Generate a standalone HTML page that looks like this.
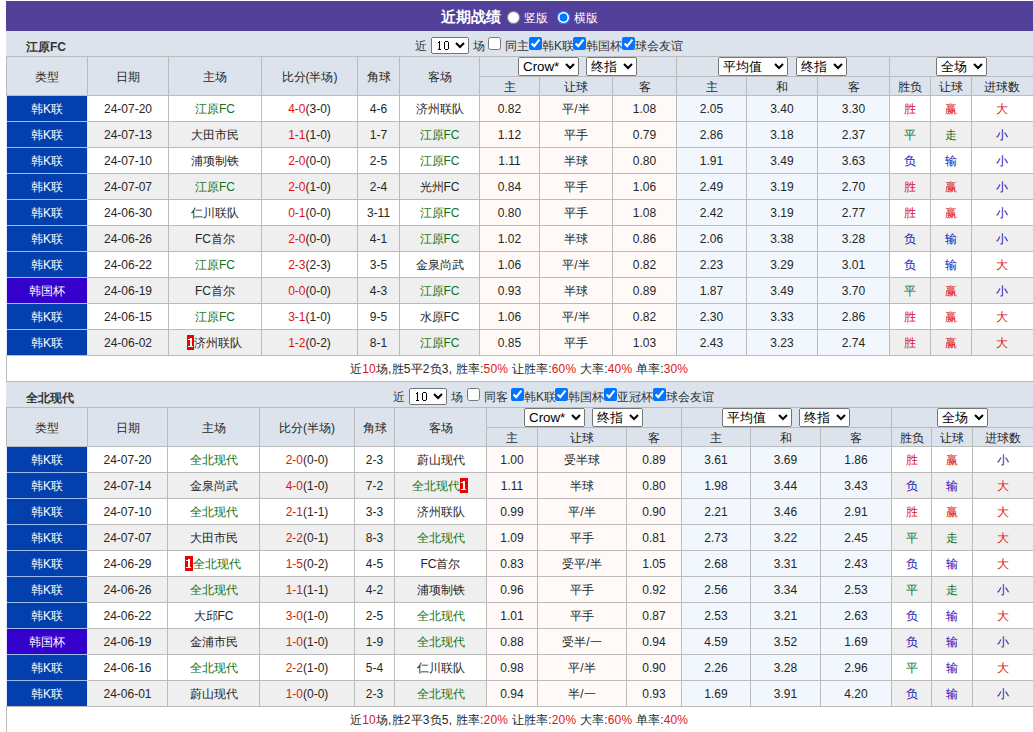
<!DOCTYPE html><html><head><meta charset="utf-8"><style>
html,body{margin:0;padding:0;background:#fff;overflow:hidden;width:1033px;height:732px}
body{position:relative;font-family:"Liberation Sans",sans-serif;font-size:12px;color:#262626}
.c{position:absolute;text-align:center;white-space:nowrap;overflow:hidden}
.l{position:absolute}
.bar{position:absolute;left:6px;width:1034px;background:#dde3ec}
.tn{position:absolute;left:26px;height:25px;line-height:32px;font-weight:bold;color:#333}
.tx{position:absolute;height:25px;line-height:31px;white-space:nowrap;color:#333}
.title{position:absolute;left:6px;top:1px;width:1034px;height:30px;background:#52409b}
.tt{position:absolute;top:1px;height:30px;line-height:31px;color:#fff;white-space:nowrap}
select{position:absolute;margin:0}
.s10{width:38px;height:17px;font-family:"Liberation Mono",monospace;font-size:12px;padding:0 1px 0 0}
.sel{height:19px;font-family:"Liberation Sans",sans-serif;font-size:13.33px}
.ten{position:absolute}
.cb{position:absolute;margin:0;width:13px;height:13px}
.rd{position:absolute;margin:0;width:13px;height:13px}
.r{color:#dd1515}
.bd{display:inline-block;background:#ee0000;width:7px;height:15px;vertical-align:-3px}

</style></head><body>
<div class="title"></div>
<div class="tt" style="left:441px;font-size:15px;font-weight:bold">近期战绩</div>
<input type="radio" name="v" class="rd" style="left:507px;top:11px">
<div class="tt" style="left:524px;line-height:35px">竖版</div>
<input type="radio" name="v" checked class="rd" style="left:557px;top:11px">
<div class="tt" style="left:574px;line-height:35px">横版</div>
<div class="bar" style="top:31px;height:25px"></div>
<div class="tn" style="top:31px">江原FC</div>
<div class="tx" style="left:415px;top:31px">近</div>
<select class="s10" style="left:431px;top:37px"><option>&nbsp;</option></select>
<svg class="ten" style="left:438px;top:41px" width="12" height="10" shape-rendering="crispEdges"><g fill="#000"><rect x="1" y="0" width="1" height="9"/><rect x="0" y="1" width="1" height="1"/><rect x="0" y="8" width="3" height="1"/><rect x="6" y="1" width="1" height="7"/><rect x="10" y="1" width="1" height="7"/><rect x="7" y="0" width="3" height="1"/><rect x="7" y="8" width="3" height="1"/></g></svg>
<div class="tx" style="left:473px;top:31px">场</div>
<input type="checkbox" class="cb" style="left:488px;top:37px">
<div class="tx" style="left:505px;top:31px">同主</div>
<input type="checkbox" checked class="cb" style="left:529px;top:37px">
<div class="tx" style="left:542px;top:31px">韩K联</div>
<input type="checkbox" checked class="cb" style="left:573px;top:37px">
<div class="tx" style="left:586px;top:31px">韩国杯</div>
<input type="checkbox" checked class="cb" style="left:622px;top:37px">
<div class="tx" style="left:635px;top:31px">球会友谊</div>
<div class="c" style="left:7px;top:57px;width:80px;height:38px;line-height:40px;background:#dde3ec;padding-top:0">类型</div>
<div class="c" style="left:88px;top:57px;width:80px;height:38px;line-height:40px;background:#dde3ec;padding-top:0">日期</div>
<div class="c" style="left:169px;top:57px;width:92px;height:38px;line-height:40px;background:#dde3ec;padding-top:0">主场</div>
<div class="c" style="left:262px;top:57px;width:95px;height:38px;line-height:40px;background:#dde3ec;padding-top:0">比分(半场)</div>
<div class="c" style="left:358px;top:57px;width:41px;height:38px;line-height:40px;background:#dde3ec;padding-top:0">角球</div>
<div class="c" style="left:400px;top:57px;width:79px;height:38px;line-height:40px;background:#dde3ec;padding-top:0">客场</div>
<div class="c" style="left:480px;top:57px;width:196px;height:19px;line-height:21px;background:#dde3ec;"></div>
<div class="c" style="left:677px;top:57px;width:212px;height:19px;line-height:21px;background:#dde3ec;"></div>
<div class="c" style="left:890px;top:57px;width:142px;height:19px;line-height:21px;background:#dde3ec;;padding-right:2px"></div>
<div class="c" style="left:480px;top:77px;width:59px;height:18px;line-height:20px;background:#dde3ec;line-height:20px">主</div>
<div class="c" style="left:540px;top:77px;width:72px;height:18px;line-height:20px;background:#dde3ec;line-height:20px">让球</div>
<div class="c" style="left:613px;top:77px;width:63px;height:18px;line-height:20px;background:#dde3ec;line-height:20px">客</div>
<div class="c" style="left:677px;top:77px;width:69px;height:18px;line-height:20px;background:#dde3ec;line-height:20px">主</div>
<div class="c" style="left:747px;top:77px;width:70px;height:18px;line-height:20px;background:#dde3ec;line-height:20px">和</div>
<div class="c" style="left:818px;top:77px;width:71px;height:18px;line-height:20px;background:#dde3ec;line-height:20px">客</div>
<div class="c" style="left:890px;top:77px;width:40px;height:18px;line-height:20px;background:#dde3ec;line-height:20px">胜负</div>
<div class="c" style="left:931px;top:77px;width:40px;height:18px;line-height:20px;background:#dde3ec;line-height:20px">让球</div>
<div class="c" style="left:972px;top:77px;width:60px;height:18px;line-height:20px;background:#dde3ec;line-height:20px;padding-right:2px">进球数</div>
<select class="sel" style="left:518px;top:57px;width:61px"><option>Crow*</option></select>
<select class="sel" style="left:586px;top:57px;width:51px"><option>终指</option></select>
<select class="sel" style="left:718px;top:57px;width:70px"><option>平均值</option></select>
<select class="sel" style="left:796px;top:57px;width:51px"><option>终指</option></select>
<select class="sel" style="left:936px;top:57px;width:51px"><option>全场</option></select>
<div class="c" style="left:7px;top:96px;width:80px;height:25px;line-height:27px;background:#0340ae;color:#fff;">韩K联</div>
<div class="c" style="left:88px;top:96px;width:80px;height:25px;line-height:27px;background:#ffffff;">24-07-20</div>
<div class="c" style="left:169px;top:96px;width:92px;height:25px;line-height:27px;background:#ffffff;"><span style="color:#167216">江原FC</span></div>
<div class="c" style="left:262px;top:96px;width:95px;height:25px;line-height:27px;background:#ffffff;"><span style="color:#dd1515">4-0</span>(3-0)</div>
<div class="c" style="left:358px;top:96px;width:41px;height:25px;line-height:27px;background:#ffffff;">4-6</div>
<div class="c" style="left:400px;top:96px;width:79px;height:25px;line-height:27px;background:#ffffff;"><span style="color:#262626">济州联队</span></div>
<div class="c" style="left:480px;top:96px;width:59px;height:25px;line-height:27px;background:#fffaf7;">0.82</div>
<div class="c" style="left:540px;top:96px;width:72px;height:25px;line-height:27px;background:#fffaf7;">平/半</div>
<div class="c" style="left:613px;top:96px;width:63px;height:25px;line-height:27px;background:#fffaf7;">1.08</div>
<div class="c" style="left:677px;top:96px;width:69px;height:25px;line-height:27px;background:#f1f7fc;">2.05</div>
<div class="c" style="left:747px;top:96px;width:70px;height:25px;line-height:27px;background:#f1f7fc;">3.40</div>
<div class="c" style="left:818px;top:96px;width:71px;height:25px;line-height:27px;background:#f1f7fc;">3.30</div>
<div class="c" style="left:890px;top:96px;width:40px;height:25px;line-height:27px;background:#ffffff;"><span style="color:#dd1515">胜</span></div>
<div class="c" style="left:931px;top:96px;width:40px;height:25px;line-height:27px;background:#ffffff;"><span style="color:#dd1515">赢</span></div>
<div class="c" style="left:972px;top:96px;width:60px;height:25px;line-height:27px;background:#ffffff;;padding-right:2px"><span style="color:#dd1515">大</span></div>
<div class="c" style="left:7px;top:122px;width:80px;height:25px;line-height:27px;background:#0340ae;color:#fff;">韩K联</div>
<div class="c" style="left:88px;top:122px;width:80px;height:25px;line-height:27px;background:#efefef;">24-07-13</div>
<div class="c" style="left:169px;top:122px;width:92px;height:25px;line-height:27px;background:#efefef;"><span style="color:#262626">大田市民</span></div>
<div class="c" style="left:262px;top:122px;width:95px;height:25px;line-height:27px;background:#efefef;"><span style="color:#dd1515">1-1</span>(1-0)</div>
<div class="c" style="left:358px;top:122px;width:41px;height:25px;line-height:27px;background:#efefef;">1-7</div>
<div class="c" style="left:400px;top:122px;width:79px;height:25px;line-height:27px;background:#efefef;"><span style="color:#167216">江原FC</span></div>
<div class="c" style="left:480px;top:122px;width:59px;height:25px;line-height:27px;background:#fffaf7;">1.12</div>
<div class="c" style="left:540px;top:122px;width:72px;height:25px;line-height:27px;background:#fffaf7;">平手</div>
<div class="c" style="left:613px;top:122px;width:63px;height:25px;line-height:27px;background:#fffaf7;">0.79</div>
<div class="c" style="left:677px;top:122px;width:69px;height:25px;line-height:27px;background:#f1f7fc;">2.86</div>
<div class="c" style="left:747px;top:122px;width:70px;height:25px;line-height:27px;background:#f1f7fc;">3.18</div>
<div class="c" style="left:818px;top:122px;width:71px;height:25px;line-height:27px;background:#f1f7fc;">2.37</div>
<div class="c" style="left:890px;top:122px;width:40px;height:25px;line-height:27px;background:#efefef;"><span style="color:#167216">平</span></div>
<div class="c" style="left:931px;top:122px;width:40px;height:25px;line-height:27px;background:#efefef;"><span style="color:#167216">走</span></div>
<div class="c" style="left:972px;top:122px;width:60px;height:25px;line-height:27px;background:#efefef;;padding-right:2px"><span style="color:#1414b4">小</span></div>
<div class="c" style="left:7px;top:148px;width:80px;height:25px;line-height:27px;background:#0340ae;color:#fff;">韩K联</div>
<div class="c" style="left:88px;top:148px;width:80px;height:25px;line-height:27px;background:#ffffff;">24-07-10</div>
<div class="c" style="left:169px;top:148px;width:92px;height:25px;line-height:27px;background:#ffffff;"><span style="color:#262626">浦项制铁</span></div>
<div class="c" style="left:262px;top:148px;width:95px;height:25px;line-height:27px;background:#ffffff;"><span style="color:#dd1515">2-0</span>(0-0)</div>
<div class="c" style="left:358px;top:148px;width:41px;height:25px;line-height:27px;background:#ffffff;">2-5</div>
<div class="c" style="left:400px;top:148px;width:79px;height:25px;line-height:27px;background:#ffffff;"><span style="color:#167216">江原FC</span></div>
<div class="c" style="left:480px;top:148px;width:59px;height:25px;line-height:27px;background:#fffaf7;">1.11</div>
<div class="c" style="left:540px;top:148px;width:72px;height:25px;line-height:27px;background:#fffaf7;">半球</div>
<div class="c" style="left:613px;top:148px;width:63px;height:25px;line-height:27px;background:#fffaf7;">0.80</div>
<div class="c" style="left:677px;top:148px;width:69px;height:25px;line-height:27px;background:#f1f7fc;">1.91</div>
<div class="c" style="left:747px;top:148px;width:70px;height:25px;line-height:27px;background:#f1f7fc;">3.49</div>
<div class="c" style="left:818px;top:148px;width:71px;height:25px;line-height:27px;background:#f1f7fc;">3.63</div>
<div class="c" style="left:890px;top:148px;width:40px;height:25px;line-height:27px;background:#ffffff;"><span style="color:#1414b4">负</span></div>
<div class="c" style="left:931px;top:148px;width:40px;height:25px;line-height:27px;background:#ffffff;"><span style="color:#1414b4">输</span></div>
<div class="c" style="left:972px;top:148px;width:60px;height:25px;line-height:27px;background:#ffffff;;padding-right:2px"><span style="color:#1414b4">小</span></div>
<div class="c" style="left:7px;top:174px;width:80px;height:25px;line-height:27px;background:#0340ae;color:#fff;">韩K联</div>
<div class="c" style="left:88px;top:174px;width:80px;height:25px;line-height:27px;background:#efefef;">24-07-07</div>
<div class="c" style="left:169px;top:174px;width:92px;height:25px;line-height:27px;background:#efefef;"><span style="color:#167216">江原FC</span></div>
<div class="c" style="left:262px;top:174px;width:95px;height:25px;line-height:27px;background:#efefef;"><span style="color:#dd1515">2-0</span>(1-0)</div>
<div class="c" style="left:358px;top:174px;width:41px;height:25px;line-height:27px;background:#efefef;">2-4</div>
<div class="c" style="left:400px;top:174px;width:79px;height:25px;line-height:27px;background:#efefef;"><span style="color:#262626">光州FC</span></div>
<div class="c" style="left:480px;top:174px;width:59px;height:25px;line-height:27px;background:#fffaf7;">0.84</div>
<div class="c" style="left:540px;top:174px;width:72px;height:25px;line-height:27px;background:#fffaf7;">平手</div>
<div class="c" style="left:613px;top:174px;width:63px;height:25px;line-height:27px;background:#fffaf7;">1.06</div>
<div class="c" style="left:677px;top:174px;width:69px;height:25px;line-height:27px;background:#f1f7fc;">2.49</div>
<div class="c" style="left:747px;top:174px;width:70px;height:25px;line-height:27px;background:#f1f7fc;">3.19</div>
<div class="c" style="left:818px;top:174px;width:71px;height:25px;line-height:27px;background:#f1f7fc;">2.70</div>
<div class="c" style="left:890px;top:174px;width:40px;height:25px;line-height:27px;background:#efefef;"><span style="color:#dd1515">胜</span></div>
<div class="c" style="left:931px;top:174px;width:40px;height:25px;line-height:27px;background:#efefef;"><span style="color:#dd1515">赢</span></div>
<div class="c" style="left:972px;top:174px;width:60px;height:25px;line-height:27px;background:#efefef;;padding-right:2px"><span style="color:#1414b4">小</span></div>
<div class="c" style="left:7px;top:200px;width:80px;height:25px;line-height:27px;background:#0340ae;color:#fff;">韩K联</div>
<div class="c" style="left:88px;top:200px;width:80px;height:25px;line-height:27px;background:#ffffff;">24-06-30</div>
<div class="c" style="left:169px;top:200px;width:92px;height:25px;line-height:27px;background:#ffffff;"><span style="color:#262626">仁川联队</span></div>
<div class="c" style="left:262px;top:200px;width:95px;height:25px;line-height:27px;background:#ffffff;"><span style="color:#dd1515">0-1</span>(0-0)</div>
<div class="c" style="left:358px;top:200px;width:41px;height:25px;line-height:27px;background:#ffffff;">3-11</div>
<div class="c" style="left:400px;top:200px;width:79px;height:25px;line-height:27px;background:#ffffff;"><span style="color:#167216">江原FC</span></div>
<div class="c" style="left:480px;top:200px;width:59px;height:25px;line-height:27px;background:#fffaf7;">0.80</div>
<div class="c" style="left:540px;top:200px;width:72px;height:25px;line-height:27px;background:#fffaf7;">平手</div>
<div class="c" style="left:613px;top:200px;width:63px;height:25px;line-height:27px;background:#fffaf7;">1.08</div>
<div class="c" style="left:677px;top:200px;width:69px;height:25px;line-height:27px;background:#f1f7fc;">2.42</div>
<div class="c" style="left:747px;top:200px;width:70px;height:25px;line-height:27px;background:#f1f7fc;">3.19</div>
<div class="c" style="left:818px;top:200px;width:71px;height:25px;line-height:27px;background:#f1f7fc;">2.77</div>
<div class="c" style="left:890px;top:200px;width:40px;height:25px;line-height:27px;background:#ffffff;"><span style="color:#dd1515">胜</span></div>
<div class="c" style="left:931px;top:200px;width:40px;height:25px;line-height:27px;background:#ffffff;"><span style="color:#dd1515">赢</span></div>
<div class="c" style="left:972px;top:200px;width:60px;height:25px;line-height:27px;background:#ffffff;;padding-right:2px"><span style="color:#1414b4">小</span></div>
<div class="c" style="left:7px;top:226px;width:80px;height:25px;line-height:27px;background:#0340ae;color:#fff;">韩K联</div>
<div class="c" style="left:88px;top:226px;width:80px;height:25px;line-height:27px;background:#efefef;">24-06-26</div>
<div class="c" style="left:169px;top:226px;width:92px;height:25px;line-height:27px;background:#efefef;"><span style="color:#262626">FC首尔</span></div>
<div class="c" style="left:262px;top:226px;width:95px;height:25px;line-height:27px;background:#efefef;"><span style="color:#dd1515">2-0</span>(0-0)</div>
<div class="c" style="left:358px;top:226px;width:41px;height:25px;line-height:27px;background:#efefef;">4-1</div>
<div class="c" style="left:400px;top:226px;width:79px;height:25px;line-height:27px;background:#efefef;"><span style="color:#167216">江原FC</span></div>
<div class="c" style="left:480px;top:226px;width:59px;height:25px;line-height:27px;background:#fffaf7;">1.02</div>
<div class="c" style="left:540px;top:226px;width:72px;height:25px;line-height:27px;background:#fffaf7;">半球</div>
<div class="c" style="left:613px;top:226px;width:63px;height:25px;line-height:27px;background:#fffaf7;">0.86</div>
<div class="c" style="left:677px;top:226px;width:69px;height:25px;line-height:27px;background:#f1f7fc;">2.06</div>
<div class="c" style="left:747px;top:226px;width:70px;height:25px;line-height:27px;background:#f1f7fc;">3.38</div>
<div class="c" style="left:818px;top:226px;width:71px;height:25px;line-height:27px;background:#f1f7fc;">3.28</div>
<div class="c" style="left:890px;top:226px;width:40px;height:25px;line-height:27px;background:#efefef;"><span style="color:#1414b4">负</span></div>
<div class="c" style="left:931px;top:226px;width:40px;height:25px;line-height:27px;background:#efefef;"><span style="color:#1414b4">输</span></div>
<div class="c" style="left:972px;top:226px;width:60px;height:25px;line-height:27px;background:#efefef;;padding-right:2px"><span style="color:#1414b4">小</span></div>
<div class="c" style="left:7px;top:252px;width:80px;height:25px;line-height:27px;background:#0340ae;color:#fff;">韩K联</div>
<div class="c" style="left:88px;top:252px;width:80px;height:25px;line-height:27px;background:#ffffff;">24-06-22</div>
<div class="c" style="left:169px;top:252px;width:92px;height:25px;line-height:27px;background:#ffffff;"><span style="color:#167216">江原FC</span></div>
<div class="c" style="left:262px;top:252px;width:95px;height:25px;line-height:27px;background:#ffffff;"><span style="color:#dd1515">2-3</span>(2-3)</div>
<div class="c" style="left:358px;top:252px;width:41px;height:25px;line-height:27px;background:#ffffff;">3-5</div>
<div class="c" style="left:400px;top:252px;width:79px;height:25px;line-height:27px;background:#ffffff;"><span style="color:#262626">金泉尚武</span></div>
<div class="c" style="left:480px;top:252px;width:59px;height:25px;line-height:27px;background:#fffaf7;">1.06</div>
<div class="c" style="left:540px;top:252px;width:72px;height:25px;line-height:27px;background:#fffaf7;">平/半</div>
<div class="c" style="left:613px;top:252px;width:63px;height:25px;line-height:27px;background:#fffaf7;">0.82</div>
<div class="c" style="left:677px;top:252px;width:69px;height:25px;line-height:27px;background:#f1f7fc;">2.23</div>
<div class="c" style="left:747px;top:252px;width:70px;height:25px;line-height:27px;background:#f1f7fc;">3.29</div>
<div class="c" style="left:818px;top:252px;width:71px;height:25px;line-height:27px;background:#f1f7fc;">3.01</div>
<div class="c" style="left:890px;top:252px;width:40px;height:25px;line-height:27px;background:#ffffff;"><span style="color:#1414b4">负</span></div>
<div class="c" style="left:931px;top:252px;width:40px;height:25px;line-height:27px;background:#ffffff;"><span style="color:#1414b4">输</span></div>
<div class="c" style="left:972px;top:252px;width:60px;height:25px;line-height:27px;background:#ffffff;;padding-right:2px"><span style="color:#dd1515">大</span></div>
<div class="c" style="left:7px;top:278px;width:80px;height:25px;line-height:27px;background:#3300cc;color:#fff;">韩国杯</div>
<div class="c" style="left:88px;top:278px;width:80px;height:25px;line-height:27px;background:#efefef;">24-06-19</div>
<div class="c" style="left:169px;top:278px;width:92px;height:25px;line-height:27px;background:#efefef;"><span style="color:#262626">FC首尔</span></div>
<div class="c" style="left:262px;top:278px;width:95px;height:25px;line-height:27px;background:#efefef;"><span style="color:#dd1515">0-0</span>(0-0)</div>
<div class="c" style="left:358px;top:278px;width:41px;height:25px;line-height:27px;background:#efefef;">4-3</div>
<div class="c" style="left:400px;top:278px;width:79px;height:25px;line-height:27px;background:#efefef;"><span style="color:#167216">江原FC</span></div>
<div class="c" style="left:480px;top:278px;width:59px;height:25px;line-height:27px;background:#fffaf7;">0.93</div>
<div class="c" style="left:540px;top:278px;width:72px;height:25px;line-height:27px;background:#fffaf7;">半球</div>
<div class="c" style="left:613px;top:278px;width:63px;height:25px;line-height:27px;background:#fffaf7;">0.89</div>
<div class="c" style="left:677px;top:278px;width:69px;height:25px;line-height:27px;background:#f1f7fc;">1.87</div>
<div class="c" style="left:747px;top:278px;width:70px;height:25px;line-height:27px;background:#f1f7fc;">3.49</div>
<div class="c" style="left:818px;top:278px;width:71px;height:25px;line-height:27px;background:#f1f7fc;">3.70</div>
<div class="c" style="left:890px;top:278px;width:40px;height:25px;line-height:27px;background:#efefef;"><span style="color:#167216">平</span></div>
<div class="c" style="left:931px;top:278px;width:40px;height:25px;line-height:27px;background:#efefef;"><span style="color:#dd1515">赢</span></div>
<div class="c" style="left:972px;top:278px;width:60px;height:25px;line-height:27px;background:#efefef;;padding-right:2px"><span style="color:#1414b4">小</span></div>
<div class="c" style="left:7px;top:304px;width:80px;height:25px;line-height:27px;background:#0340ae;color:#fff;">韩K联</div>
<div class="c" style="left:88px;top:304px;width:80px;height:25px;line-height:27px;background:#ffffff;">24-06-15</div>
<div class="c" style="left:169px;top:304px;width:92px;height:25px;line-height:27px;background:#ffffff;"><span style="color:#167216">江原FC</span></div>
<div class="c" style="left:262px;top:304px;width:95px;height:25px;line-height:27px;background:#ffffff;"><span style="color:#dd1515">3-1</span>(1-0)</div>
<div class="c" style="left:358px;top:304px;width:41px;height:25px;line-height:27px;background:#ffffff;">9-5</div>
<div class="c" style="left:400px;top:304px;width:79px;height:25px;line-height:27px;background:#ffffff;"><span style="color:#262626">水原FC</span></div>
<div class="c" style="left:480px;top:304px;width:59px;height:25px;line-height:27px;background:#fffaf7;">1.06</div>
<div class="c" style="left:540px;top:304px;width:72px;height:25px;line-height:27px;background:#fffaf7;">平/半</div>
<div class="c" style="left:613px;top:304px;width:63px;height:25px;line-height:27px;background:#fffaf7;">0.82</div>
<div class="c" style="left:677px;top:304px;width:69px;height:25px;line-height:27px;background:#f1f7fc;">2.30</div>
<div class="c" style="left:747px;top:304px;width:70px;height:25px;line-height:27px;background:#f1f7fc;">3.33</div>
<div class="c" style="left:818px;top:304px;width:71px;height:25px;line-height:27px;background:#f1f7fc;">2.86</div>
<div class="c" style="left:890px;top:304px;width:40px;height:25px;line-height:27px;background:#ffffff;"><span style="color:#dd1515">胜</span></div>
<div class="c" style="left:931px;top:304px;width:40px;height:25px;line-height:27px;background:#ffffff;"><span style="color:#dd1515">赢</span></div>
<div class="c" style="left:972px;top:304px;width:60px;height:25px;line-height:27px;background:#ffffff;;padding-right:2px"><span style="color:#dd1515">大</span></div>
<div class="c" style="left:7px;top:330px;width:80px;height:25px;line-height:27px;background:#0340ae;color:#fff;">韩K联</div>
<div class="c" style="left:88px;top:330px;width:80px;height:25px;line-height:27px;background:#efefef;">24-06-02</div>
<div class="c" style="left:169px;top:330px;width:92px;height:25px;line-height:27px;background:#efefef;padding-right:1px;width:91px"><span class="bd"><svg width="7" height="15" shape-rendering="crispEdges" style="display:block"><g fill="#fff"><rect x="3" y="3" width="2" height="9"/><rect x="1" y="11" width="5" height="1"/><rect x="1" y="4" width="2" height="1"/></g></svg></span><span style="color:#262626">济州联队</span></div>
<div class="c" style="left:262px;top:330px;width:95px;height:25px;line-height:27px;background:#efefef;"><span style="color:#dd1515">1-2</span>(0-2)</div>
<div class="c" style="left:358px;top:330px;width:41px;height:25px;line-height:27px;background:#efefef;">8-1</div>
<div class="c" style="left:400px;top:330px;width:79px;height:25px;line-height:27px;background:#efefef;"><span style="color:#167216">江原FC</span></div>
<div class="c" style="left:480px;top:330px;width:59px;height:25px;line-height:27px;background:#fffaf7;">0.85</div>
<div class="c" style="left:540px;top:330px;width:72px;height:25px;line-height:27px;background:#fffaf7;">平手</div>
<div class="c" style="left:613px;top:330px;width:63px;height:25px;line-height:27px;background:#fffaf7;">1.03</div>
<div class="c" style="left:677px;top:330px;width:69px;height:25px;line-height:27px;background:#f1f7fc;">2.43</div>
<div class="c" style="left:747px;top:330px;width:70px;height:25px;line-height:27px;background:#f1f7fc;">3.23</div>
<div class="c" style="left:818px;top:330px;width:71px;height:25px;line-height:27px;background:#f1f7fc;">2.74</div>
<div class="c" style="left:890px;top:330px;width:40px;height:25px;line-height:27px;background:#efefef;"><span style="color:#dd1515">胜</span></div>
<div class="c" style="left:931px;top:330px;width:40px;height:25px;line-height:27px;background:#efefef;"><span style="color:#dd1515">赢</span></div>
<div class="c" style="left:972px;top:330px;width:60px;height:25px;line-height:27px;background:#efefef;;padding-right:2px"><span style="color:#dd1515">大</span></div>
<div class="c" style="left:7px;top:356px;width:1025px;height:25px;line-height:27px;background:#ffffff;text-align:left;padding-left:343px;box-sizing:border-box;letter-spacing:0.18px">近<span class="r">10</span>场,胜5平2负3, 胜率:<span class="r">50%</span> 让胜率:<span class="r">60%</span> 大率:<span class="r">40%</span> 单率:<span class="r">30%</span></div>
<div class="l" style="left:6px;top:56px;width:1035px;height:1px;background:#bbbbbb"></div>
<div class="l" style="left:479px;top:76px;width:562px;height:1px;background:#bbbbbb"></div>
<div class="l" style="left:6px;top:95px;width:1035px;height:1px;background:#bbbbbb"></div>
<div class="l" style="left:6px;top:121px;width:1035px;height:1px;background:#bbbbbb"></div>
<div class="l" style="left:6px;top:147px;width:1035px;height:1px;background:#bbbbbb"></div>
<div class="l" style="left:6px;top:173px;width:1035px;height:1px;background:#bbbbbb"></div>
<div class="l" style="left:6px;top:199px;width:1035px;height:1px;background:#bbbbbb"></div>
<div class="l" style="left:6px;top:225px;width:1035px;height:1px;background:#bbbbbb"></div>
<div class="l" style="left:6px;top:251px;width:1035px;height:1px;background:#bbbbbb"></div>
<div class="l" style="left:6px;top:277px;width:1035px;height:1px;background:#bbbbbb"></div>
<div class="l" style="left:6px;top:303px;width:1035px;height:1px;background:#bbbbbb"></div>
<div class="l" style="left:6px;top:329px;width:1035px;height:1px;background:#bbbbbb"></div>
<div class="l" style="left:6px;top:355px;width:1035px;height:1px;background:#bbbbbb"></div>
<div class="l" style="left:6px;top:381px;width:1035px;height:1px;background:#bbbbbb"></div>
<div class="l" style="left:6px;top:56px;width:1px;height:300px;background:#bbbbbb"></div>
<div class="l" style="left:87px;top:56px;width:1px;height:300px;background:#bbbbbb"></div>
<div class="l" style="left:168px;top:56px;width:1px;height:300px;background:#bbbbbb"></div>
<div class="l" style="left:261px;top:56px;width:1px;height:300px;background:#bbbbbb"></div>
<div class="l" style="left:357px;top:56px;width:1px;height:300px;background:#bbbbbb"></div>
<div class="l" style="left:399px;top:56px;width:1px;height:300px;background:#bbbbbb"></div>
<div class="l" style="left:479px;top:56px;width:1px;height:300px;background:#bbbbbb"></div>
<div class="l" style="left:539px;top:76px;width:1px;height:280px;background:#bbbbbb"></div>
<div class="l" style="left:612px;top:76px;width:1px;height:280px;background:#bbbbbb"></div>
<div class="l" style="left:676px;top:56px;width:1px;height:300px;background:#bbbbbb"></div>
<div class="l" style="left:746px;top:76px;width:1px;height:280px;background:#bbbbbb"></div>
<div class="l" style="left:817px;top:76px;width:1px;height:280px;background:#bbbbbb"></div>
<div class="l" style="left:889px;top:56px;width:1px;height:300px;background:#bbbbbb"></div>
<div class="l" style="left:930px;top:76px;width:1px;height:280px;background:#bbbbbb"></div>
<div class="l" style="left:971px;top:76px;width:1px;height:280px;background:#bbbbbb"></div>
<div class="l" style="left:6px;top:355px;width:1px;height:27px;background:#bbbbbb"></div>
<div class="l" style="left:6px;top:96px;width:1px;height:259px;background:#dfe8fa"></div>
<div class="l" style="left:87px;top:96px;width:1px;height:259px;background:#dfe8fa"></div>
<div class="l" style="left:7px;top:121px;width:80px;height:1px;background:#9dbcf2"></div>
<div class="l" style="left:7px;top:147px;width:80px;height:1px;background:#9dbcf2"></div>
<div class="l" style="left:7px;top:173px;width:80px;height:1px;background:#9dbcf2"></div>
<div class="l" style="left:7px;top:199px;width:80px;height:1px;background:#9dbcf2"></div>
<div class="l" style="left:7px;top:225px;width:80px;height:1px;background:#9dbcf2"></div>
<div class="l" style="left:7px;top:251px;width:80px;height:1px;background:#9dbcf2"></div>
<div class="l" style="left:7px;top:277px;width:80px;height:1px;background:#9dbcf2"></div>
<div class="l" style="left:7px;top:303px;width:80px;height:1px;background:#9dbcf2"></div>
<div class="l" style="left:7px;top:329px;width:80px;height:1px;background:#9dbcf2"></div>
<div class="bar" style="top:382px;height:25px"></div>
<div class="tn" style="top:382px">全北现代</div>
<div class="tx" style="left:393px;top:382px">近</div>
<select class="s10" style="left:409px;top:388px"><option>&nbsp;</option></select>
<svg class="ten" style="left:416px;top:392px" width="12" height="10" shape-rendering="crispEdges"><g fill="#000"><rect x="1" y="0" width="1" height="9"/><rect x="0" y="1" width="1" height="1"/><rect x="0" y="8" width="3" height="1"/><rect x="6" y="1" width="1" height="7"/><rect x="10" y="1" width="1" height="7"/><rect x="7" y="0" width="3" height="1"/><rect x="7" y="8" width="3" height="1"/></g></svg>
<div class="tx" style="left:451px;top:382px">场</div>
<input type="checkbox" class="cb" style="left:467px;top:388px">
<div class="tx" style="left:484px;top:382px">同客</div>
<input type="checkbox" checked class="cb" style="left:511px;top:388px">
<div class="tx" style="left:524px;top:382px">韩K联</div>
<input type="checkbox" checked class="cb" style="left:555px;top:388px">
<div class="tx" style="left:568px;top:382px">韩国杯</div>
<input type="checkbox" checked class="cb" style="left:604px;top:388px">
<div class="tx" style="left:617px;top:382px">亚冠杯</div>
<input type="checkbox" checked class="cb" style="left:653px;top:388px">
<div class="tx" style="left:666px;top:382px">球会友谊</div>
<div class="c" style="left:7px;top:408px;width:80px;height:38px;line-height:40px;background:#dde3ec;padding-top:0">类型</div>
<div class="c" style="left:88px;top:408px;width:79px;height:38px;line-height:40px;background:#dde3ec;padding-top:0">日期</div>
<div class="c" style="left:168px;top:408px;width:91px;height:38px;line-height:40px;background:#dde3ec;padding-top:0">主场</div>
<div class="c" style="left:260px;top:408px;width:94px;height:38px;line-height:40px;background:#dde3ec;padding-top:0">比分(半场)</div>
<div class="c" style="left:355px;top:408px;width:39px;height:38px;line-height:40px;background:#dde3ec;padding-top:0">角球</div>
<div class="c" style="left:395px;top:408px;width:91px;height:38px;line-height:40px;background:#dde3ec;padding-top:0">客场</div>
<div class="c" style="left:487px;top:408px;width:194px;height:19px;line-height:21px;background:#dde3ec;"></div>
<div class="c" style="left:682px;top:408px;width:209px;height:19px;line-height:21px;background:#dde3ec;"></div>
<div class="c" style="left:892px;top:408px;width:140px;height:19px;line-height:21px;background:#dde3ec;;padding-right:2px"></div>
<div class="c" style="left:487px;top:428px;width:50px;height:18px;line-height:20px;background:#dde3ec;line-height:20px">主</div>
<div class="c" style="left:538px;top:428px;width:88px;height:18px;line-height:20px;background:#dde3ec;line-height:20px">让球</div>
<div class="c" style="left:627px;top:428px;width:54px;height:18px;line-height:20px;background:#dde3ec;line-height:20px">客</div>
<div class="c" style="left:682px;top:428px;width:68px;height:18px;line-height:20px;background:#dde3ec;line-height:20px">主</div>
<div class="c" style="left:751px;top:428px;width:69px;height:18px;line-height:20px;background:#dde3ec;line-height:20px">和</div>
<div class="c" style="left:821px;top:428px;width:70px;height:18px;line-height:20px;background:#dde3ec;line-height:20px">客</div>
<div class="c" style="left:892px;top:428px;width:39px;height:18px;line-height:20px;background:#dde3ec;line-height:20px">胜负</div>
<div class="c" style="left:932px;top:428px;width:40px;height:18px;line-height:20px;background:#dde3ec;line-height:20px">让球</div>
<div class="c" style="left:973px;top:428px;width:59px;height:18px;line-height:20px;background:#dde3ec;line-height:20px;padding-right:2px">进球数</div>
<select class="sel" style="left:524px;top:408px;width:61px"><option>Crow*</option></select>
<select class="sel" style="left:592px;top:408px;width:51px"><option>终指</option></select>
<select class="sel" style="left:722px;top:408px;width:70px"><option>平均值</option></select>
<select class="sel" style="left:799px;top:408px;width:51px"><option>终指</option></select>
<select class="sel" style="left:937px;top:408px;width:51px"><option>全场</option></select>
<div class="c" style="left:7px;top:447px;width:80px;height:25px;line-height:27px;background:#0340ae;color:#fff;">韩K联</div>
<div class="c" style="left:88px;top:447px;width:79px;height:25px;line-height:27px;background:#ffffff;">24-07-20</div>
<div class="c" style="left:168px;top:447px;width:91px;height:25px;line-height:27px;background:#ffffff;"><span style="color:#167216">全北现代</span></div>
<div class="c" style="left:260px;top:447px;width:94px;height:25px;line-height:27px;background:#ffffff;"><span style="color:#dd1515">2-0</span>(0-0)</div>
<div class="c" style="left:355px;top:447px;width:39px;height:25px;line-height:27px;background:#ffffff;">2-3</div>
<div class="c" style="left:395px;top:447px;width:91px;height:25px;line-height:27px;background:#ffffff;"><span style="color:#262626">蔚山现代</span></div>
<div class="c" style="left:487px;top:447px;width:50px;height:25px;line-height:27px;background:#fffaf7;">1.00</div>
<div class="c" style="left:538px;top:447px;width:88px;height:25px;line-height:27px;background:#fffaf7;">受半球</div>
<div class="c" style="left:627px;top:447px;width:54px;height:25px;line-height:27px;background:#fffaf7;">0.89</div>
<div class="c" style="left:682px;top:447px;width:68px;height:25px;line-height:27px;background:#f1f7fc;">3.61</div>
<div class="c" style="left:751px;top:447px;width:69px;height:25px;line-height:27px;background:#f1f7fc;">3.69</div>
<div class="c" style="left:821px;top:447px;width:70px;height:25px;line-height:27px;background:#f1f7fc;">1.86</div>
<div class="c" style="left:892px;top:447px;width:39px;height:25px;line-height:27px;background:#ffffff;"><span style="color:#dd1515">胜</span></div>
<div class="c" style="left:932px;top:447px;width:40px;height:25px;line-height:27px;background:#ffffff;"><span style="color:#dd1515">赢</span></div>
<div class="c" style="left:973px;top:447px;width:59px;height:25px;line-height:27px;background:#ffffff;;padding-right:2px"><span style="color:#1414b4">小</span></div>
<div class="c" style="left:7px;top:473px;width:80px;height:25px;line-height:27px;background:#0340ae;color:#fff;">韩K联</div>
<div class="c" style="left:88px;top:473px;width:79px;height:25px;line-height:27px;background:#efefef;">24-07-14</div>
<div class="c" style="left:168px;top:473px;width:91px;height:25px;line-height:27px;background:#efefef;"><span style="color:#262626">金泉尚武</span></div>
<div class="c" style="left:260px;top:473px;width:94px;height:25px;line-height:27px;background:#efefef;"><span style="color:#dd1515">4-0</span>(1-0)</div>
<div class="c" style="left:355px;top:473px;width:39px;height:25px;line-height:27px;background:#efefef;">7-2</div>
<div class="c" style="left:395px;top:473px;width:91px;height:25px;line-height:27px;background:#efefef;padding-right:1px;width:90px"><span style="color:#167216">全北现代</span><span class="bd" style="width:8px"><svg width="7" height="15" shape-rendering="crispEdges" style="display:block"><g fill="#fff"><rect x="3" y="3" width="2" height="9"/><rect x="1" y="11" width="5" height="1"/><rect x="1" y="4" width="2" height="1"/></g></svg></span></div>
<div class="c" style="left:487px;top:473px;width:50px;height:25px;line-height:27px;background:#fffaf7;">1.11</div>
<div class="c" style="left:538px;top:473px;width:88px;height:25px;line-height:27px;background:#fffaf7;">半球</div>
<div class="c" style="left:627px;top:473px;width:54px;height:25px;line-height:27px;background:#fffaf7;">0.80</div>
<div class="c" style="left:682px;top:473px;width:68px;height:25px;line-height:27px;background:#f1f7fc;">1.98</div>
<div class="c" style="left:751px;top:473px;width:69px;height:25px;line-height:27px;background:#f1f7fc;">3.44</div>
<div class="c" style="left:821px;top:473px;width:70px;height:25px;line-height:27px;background:#f1f7fc;">3.43</div>
<div class="c" style="left:892px;top:473px;width:39px;height:25px;line-height:27px;background:#efefef;"><span style="color:#1414b4">负</span></div>
<div class="c" style="left:932px;top:473px;width:40px;height:25px;line-height:27px;background:#efefef;"><span style="color:#1414b4">输</span></div>
<div class="c" style="left:973px;top:473px;width:59px;height:25px;line-height:27px;background:#efefef;;padding-right:2px"><span style="color:#dd1515">大</span></div>
<div class="c" style="left:7px;top:499px;width:80px;height:25px;line-height:27px;background:#0340ae;color:#fff;">韩K联</div>
<div class="c" style="left:88px;top:499px;width:79px;height:25px;line-height:27px;background:#ffffff;">24-07-10</div>
<div class="c" style="left:168px;top:499px;width:91px;height:25px;line-height:27px;background:#ffffff;"><span style="color:#167216">全北现代</span></div>
<div class="c" style="left:260px;top:499px;width:94px;height:25px;line-height:27px;background:#ffffff;"><span style="color:#dd1515">2-1</span>(1-1)</div>
<div class="c" style="left:355px;top:499px;width:39px;height:25px;line-height:27px;background:#ffffff;">3-3</div>
<div class="c" style="left:395px;top:499px;width:91px;height:25px;line-height:27px;background:#ffffff;"><span style="color:#262626">济州联队</span></div>
<div class="c" style="left:487px;top:499px;width:50px;height:25px;line-height:27px;background:#fffaf7;">0.99</div>
<div class="c" style="left:538px;top:499px;width:88px;height:25px;line-height:27px;background:#fffaf7;">平/半</div>
<div class="c" style="left:627px;top:499px;width:54px;height:25px;line-height:27px;background:#fffaf7;">0.90</div>
<div class="c" style="left:682px;top:499px;width:68px;height:25px;line-height:27px;background:#f1f7fc;">2.21</div>
<div class="c" style="left:751px;top:499px;width:69px;height:25px;line-height:27px;background:#f1f7fc;">3.46</div>
<div class="c" style="left:821px;top:499px;width:70px;height:25px;line-height:27px;background:#f1f7fc;">2.91</div>
<div class="c" style="left:892px;top:499px;width:39px;height:25px;line-height:27px;background:#ffffff;"><span style="color:#dd1515">胜</span></div>
<div class="c" style="left:932px;top:499px;width:40px;height:25px;line-height:27px;background:#ffffff;"><span style="color:#dd1515">赢</span></div>
<div class="c" style="left:973px;top:499px;width:59px;height:25px;line-height:27px;background:#ffffff;;padding-right:2px"><span style="color:#dd1515">大</span></div>
<div class="c" style="left:7px;top:525px;width:80px;height:25px;line-height:27px;background:#0340ae;color:#fff;">韩K联</div>
<div class="c" style="left:88px;top:525px;width:79px;height:25px;line-height:27px;background:#efefef;">24-07-07</div>
<div class="c" style="left:168px;top:525px;width:91px;height:25px;line-height:27px;background:#efefef;"><span style="color:#262626">大田市民</span></div>
<div class="c" style="left:260px;top:525px;width:94px;height:25px;line-height:27px;background:#efefef;"><span style="color:#dd1515">2-2</span>(0-1)</div>
<div class="c" style="left:355px;top:525px;width:39px;height:25px;line-height:27px;background:#efefef;">8-3</div>
<div class="c" style="left:395px;top:525px;width:91px;height:25px;line-height:27px;background:#efefef;"><span style="color:#167216">全北现代</span></div>
<div class="c" style="left:487px;top:525px;width:50px;height:25px;line-height:27px;background:#fffaf7;">1.09</div>
<div class="c" style="left:538px;top:525px;width:88px;height:25px;line-height:27px;background:#fffaf7;">平手</div>
<div class="c" style="left:627px;top:525px;width:54px;height:25px;line-height:27px;background:#fffaf7;">0.81</div>
<div class="c" style="left:682px;top:525px;width:68px;height:25px;line-height:27px;background:#f1f7fc;">2.73</div>
<div class="c" style="left:751px;top:525px;width:69px;height:25px;line-height:27px;background:#f1f7fc;">3.22</div>
<div class="c" style="left:821px;top:525px;width:70px;height:25px;line-height:27px;background:#f1f7fc;">2.45</div>
<div class="c" style="left:892px;top:525px;width:39px;height:25px;line-height:27px;background:#efefef;"><span style="color:#167216">平</span></div>
<div class="c" style="left:932px;top:525px;width:40px;height:25px;line-height:27px;background:#efefef;"><span style="color:#167216">走</span></div>
<div class="c" style="left:973px;top:525px;width:59px;height:25px;line-height:27px;background:#efefef;;padding-right:2px"><span style="color:#dd1515">大</span></div>
<div class="c" style="left:7px;top:551px;width:80px;height:25px;line-height:27px;background:#0340ae;color:#fff;">韩K联</div>
<div class="c" style="left:88px;top:551px;width:79px;height:25px;line-height:27px;background:#ffffff;">24-06-29</div>
<div class="c" style="left:168px;top:551px;width:91px;height:25px;line-height:27px;background:#ffffff;padding-right:1px;width:90px"><span class="bd" style="width:8px"><svg width="7" height="15" shape-rendering="crispEdges" style="display:block"><g fill="#fff"><rect x="3" y="3" width="2" height="9"/><rect x="1" y="11" width="5" height="1"/><rect x="1" y="4" width="2" height="1"/></g></svg></span><span style="color:#167216">全北现代</span></div>
<div class="c" style="left:260px;top:551px;width:94px;height:25px;line-height:27px;background:#ffffff;"><span style="color:#dd1515">1-5</span>(0-2)</div>
<div class="c" style="left:355px;top:551px;width:39px;height:25px;line-height:27px;background:#ffffff;">4-5</div>
<div class="c" style="left:395px;top:551px;width:91px;height:25px;line-height:27px;background:#ffffff;"><span style="color:#262626">FC首尔</span></div>
<div class="c" style="left:487px;top:551px;width:50px;height:25px;line-height:27px;background:#fffaf7;">0.83</div>
<div class="c" style="left:538px;top:551px;width:88px;height:25px;line-height:27px;background:#fffaf7;">受平/半</div>
<div class="c" style="left:627px;top:551px;width:54px;height:25px;line-height:27px;background:#fffaf7;">1.05</div>
<div class="c" style="left:682px;top:551px;width:68px;height:25px;line-height:27px;background:#f1f7fc;">2.68</div>
<div class="c" style="left:751px;top:551px;width:69px;height:25px;line-height:27px;background:#f1f7fc;">3.31</div>
<div class="c" style="left:821px;top:551px;width:70px;height:25px;line-height:27px;background:#f1f7fc;">2.43</div>
<div class="c" style="left:892px;top:551px;width:39px;height:25px;line-height:27px;background:#ffffff;"><span style="color:#1414b4">负</span></div>
<div class="c" style="left:932px;top:551px;width:40px;height:25px;line-height:27px;background:#ffffff;"><span style="color:#1414b4">输</span></div>
<div class="c" style="left:973px;top:551px;width:59px;height:25px;line-height:27px;background:#ffffff;;padding-right:2px"><span style="color:#dd1515">大</span></div>
<div class="c" style="left:7px;top:577px;width:80px;height:25px;line-height:27px;background:#0340ae;color:#fff;">韩K联</div>
<div class="c" style="left:88px;top:577px;width:79px;height:25px;line-height:27px;background:#efefef;">24-06-26</div>
<div class="c" style="left:168px;top:577px;width:91px;height:25px;line-height:27px;background:#efefef;"><span style="color:#167216">全北现代</span></div>
<div class="c" style="left:260px;top:577px;width:94px;height:25px;line-height:27px;background:#efefef;"><span style="color:#dd1515">1-1</span>(1-1)</div>
<div class="c" style="left:355px;top:577px;width:39px;height:25px;line-height:27px;background:#efefef;">4-2</div>
<div class="c" style="left:395px;top:577px;width:91px;height:25px;line-height:27px;background:#efefef;"><span style="color:#262626">浦项制铁</span></div>
<div class="c" style="left:487px;top:577px;width:50px;height:25px;line-height:27px;background:#fffaf7;">0.96</div>
<div class="c" style="left:538px;top:577px;width:88px;height:25px;line-height:27px;background:#fffaf7;">平手</div>
<div class="c" style="left:627px;top:577px;width:54px;height:25px;line-height:27px;background:#fffaf7;">0.92</div>
<div class="c" style="left:682px;top:577px;width:68px;height:25px;line-height:27px;background:#f1f7fc;">2.56</div>
<div class="c" style="left:751px;top:577px;width:69px;height:25px;line-height:27px;background:#f1f7fc;">3.34</div>
<div class="c" style="left:821px;top:577px;width:70px;height:25px;line-height:27px;background:#f1f7fc;">2.53</div>
<div class="c" style="left:892px;top:577px;width:39px;height:25px;line-height:27px;background:#efefef;"><span style="color:#167216">平</span></div>
<div class="c" style="left:932px;top:577px;width:40px;height:25px;line-height:27px;background:#efefef;"><span style="color:#167216">走</span></div>
<div class="c" style="left:973px;top:577px;width:59px;height:25px;line-height:27px;background:#efefef;;padding-right:2px"><span style="color:#1414b4">小</span></div>
<div class="c" style="left:7px;top:603px;width:80px;height:25px;line-height:27px;background:#0340ae;color:#fff;">韩K联</div>
<div class="c" style="left:88px;top:603px;width:79px;height:25px;line-height:27px;background:#ffffff;">24-06-22</div>
<div class="c" style="left:168px;top:603px;width:91px;height:25px;line-height:27px;background:#ffffff;"><span style="color:#262626">大邱FC</span></div>
<div class="c" style="left:260px;top:603px;width:94px;height:25px;line-height:27px;background:#ffffff;"><span style="color:#dd1515">3-0</span>(1-0)</div>
<div class="c" style="left:355px;top:603px;width:39px;height:25px;line-height:27px;background:#ffffff;">2-5</div>
<div class="c" style="left:395px;top:603px;width:91px;height:25px;line-height:27px;background:#ffffff;"><span style="color:#167216">全北现代</span></div>
<div class="c" style="left:487px;top:603px;width:50px;height:25px;line-height:27px;background:#fffaf7;">1.01</div>
<div class="c" style="left:538px;top:603px;width:88px;height:25px;line-height:27px;background:#fffaf7;">平手</div>
<div class="c" style="left:627px;top:603px;width:54px;height:25px;line-height:27px;background:#fffaf7;">0.87</div>
<div class="c" style="left:682px;top:603px;width:68px;height:25px;line-height:27px;background:#f1f7fc;">2.53</div>
<div class="c" style="left:751px;top:603px;width:69px;height:25px;line-height:27px;background:#f1f7fc;">3.21</div>
<div class="c" style="left:821px;top:603px;width:70px;height:25px;line-height:27px;background:#f1f7fc;">2.63</div>
<div class="c" style="left:892px;top:603px;width:39px;height:25px;line-height:27px;background:#ffffff;"><span style="color:#1414b4">负</span></div>
<div class="c" style="left:932px;top:603px;width:40px;height:25px;line-height:27px;background:#ffffff;"><span style="color:#1414b4">输</span></div>
<div class="c" style="left:973px;top:603px;width:59px;height:25px;line-height:27px;background:#ffffff;;padding-right:2px"><span style="color:#dd1515">大</span></div>
<div class="c" style="left:7px;top:629px;width:80px;height:25px;line-height:27px;background:#3300cc;color:#fff;">韩国杯</div>
<div class="c" style="left:88px;top:629px;width:79px;height:25px;line-height:27px;background:#efefef;">24-06-19</div>
<div class="c" style="left:168px;top:629px;width:91px;height:25px;line-height:27px;background:#efefef;"><span style="color:#262626">金浦市民</span></div>
<div class="c" style="left:260px;top:629px;width:94px;height:25px;line-height:27px;background:#efefef;"><span style="color:#dd1515">1-0</span>(1-0)</div>
<div class="c" style="left:355px;top:629px;width:39px;height:25px;line-height:27px;background:#efefef;">1-9</div>
<div class="c" style="left:395px;top:629px;width:91px;height:25px;line-height:27px;background:#efefef;"><span style="color:#167216">全北现代</span></div>
<div class="c" style="left:487px;top:629px;width:50px;height:25px;line-height:27px;background:#fffaf7;">0.88</div>
<div class="c" style="left:538px;top:629px;width:88px;height:25px;line-height:27px;background:#fffaf7;">受半/一</div>
<div class="c" style="left:627px;top:629px;width:54px;height:25px;line-height:27px;background:#fffaf7;">0.94</div>
<div class="c" style="left:682px;top:629px;width:68px;height:25px;line-height:27px;background:#f1f7fc;">4.59</div>
<div class="c" style="left:751px;top:629px;width:69px;height:25px;line-height:27px;background:#f1f7fc;">3.52</div>
<div class="c" style="left:821px;top:629px;width:70px;height:25px;line-height:27px;background:#f1f7fc;">1.69</div>
<div class="c" style="left:892px;top:629px;width:39px;height:25px;line-height:27px;background:#efefef;"><span style="color:#1414b4">负</span></div>
<div class="c" style="left:932px;top:629px;width:40px;height:25px;line-height:27px;background:#efefef;"><span style="color:#1414b4">输</span></div>
<div class="c" style="left:973px;top:629px;width:59px;height:25px;line-height:27px;background:#efefef;;padding-right:2px"><span style="color:#1414b4">小</span></div>
<div class="c" style="left:7px;top:655px;width:80px;height:25px;line-height:27px;background:#0340ae;color:#fff;">韩K联</div>
<div class="c" style="left:88px;top:655px;width:79px;height:25px;line-height:27px;background:#ffffff;">24-06-16</div>
<div class="c" style="left:168px;top:655px;width:91px;height:25px;line-height:27px;background:#ffffff;"><span style="color:#167216">全北现代</span></div>
<div class="c" style="left:260px;top:655px;width:94px;height:25px;line-height:27px;background:#ffffff;"><span style="color:#dd1515">2-2</span>(1-0)</div>
<div class="c" style="left:355px;top:655px;width:39px;height:25px;line-height:27px;background:#ffffff;">5-4</div>
<div class="c" style="left:395px;top:655px;width:91px;height:25px;line-height:27px;background:#ffffff;"><span style="color:#262626">仁川联队</span></div>
<div class="c" style="left:487px;top:655px;width:50px;height:25px;line-height:27px;background:#fffaf7;">0.98</div>
<div class="c" style="left:538px;top:655px;width:88px;height:25px;line-height:27px;background:#fffaf7;">平/半</div>
<div class="c" style="left:627px;top:655px;width:54px;height:25px;line-height:27px;background:#fffaf7;">0.90</div>
<div class="c" style="left:682px;top:655px;width:68px;height:25px;line-height:27px;background:#f1f7fc;">2.26</div>
<div class="c" style="left:751px;top:655px;width:69px;height:25px;line-height:27px;background:#f1f7fc;">3.28</div>
<div class="c" style="left:821px;top:655px;width:70px;height:25px;line-height:27px;background:#f1f7fc;">2.96</div>
<div class="c" style="left:892px;top:655px;width:39px;height:25px;line-height:27px;background:#ffffff;"><span style="color:#167216">平</span></div>
<div class="c" style="left:932px;top:655px;width:40px;height:25px;line-height:27px;background:#ffffff;"><span style="color:#1414b4">输</span></div>
<div class="c" style="left:973px;top:655px;width:59px;height:25px;line-height:27px;background:#ffffff;;padding-right:2px"><span style="color:#dd1515">大</span></div>
<div class="c" style="left:7px;top:681px;width:80px;height:25px;line-height:27px;background:#0340ae;color:#fff;">韩K联</div>
<div class="c" style="left:88px;top:681px;width:79px;height:25px;line-height:27px;background:#efefef;">24-06-01</div>
<div class="c" style="left:168px;top:681px;width:91px;height:25px;line-height:27px;background:#efefef;"><span style="color:#262626">蔚山现代</span></div>
<div class="c" style="left:260px;top:681px;width:94px;height:25px;line-height:27px;background:#efefef;"><span style="color:#dd1515">1-0</span>(0-0)</div>
<div class="c" style="left:355px;top:681px;width:39px;height:25px;line-height:27px;background:#efefef;">2-3</div>
<div class="c" style="left:395px;top:681px;width:91px;height:25px;line-height:27px;background:#efefef;"><span style="color:#167216">全北现代</span></div>
<div class="c" style="left:487px;top:681px;width:50px;height:25px;line-height:27px;background:#fffaf7;">0.94</div>
<div class="c" style="left:538px;top:681px;width:88px;height:25px;line-height:27px;background:#fffaf7;">半/一</div>
<div class="c" style="left:627px;top:681px;width:54px;height:25px;line-height:27px;background:#fffaf7;">0.93</div>
<div class="c" style="left:682px;top:681px;width:68px;height:25px;line-height:27px;background:#f1f7fc;">1.69</div>
<div class="c" style="left:751px;top:681px;width:69px;height:25px;line-height:27px;background:#f1f7fc;">3.91</div>
<div class="c" style="left:821px;top:681px;width:70px;height:25px;line-height:27px;background:#f1f7fc;">4.20</div>
<div class="c" style="left:892px;top:681px;width:39px;height:25px;line-height:27px;background:#efefef;"><span style="color:#1414b4">负</span></div>
<div class="c" style="left:932px;top:681px;width:40px;height:25px;line-height:27px;background:#efefef;"><span style="color:#1414b4">输</span></div>
<div class="c" style="left:973px;top:681px;width:59px;height:25px;line-height:27px;background:#efefef;;padding-right:2px"><span style="color:#1414b4">小</span></div>
<div class="c" style="left:7px;top:707px;width:1025px;height:25px;line-height:27px;background:#ffffff;text-align:left;padding-left:343px;box-sizing:border-box;letter-spacing:0.18px">近<span class="r">10</span>场,胜2平3负5, 胜率:<span class="r">20%</span> 让胜率:<span class="r">20%</span> 大率:<span class="r">60%</span> 单率:<span class="r">40%</span></div>
<div class="l" style="left:6px;top:407px;width:1035px;height:1px;background:#bbbbbb"></div>
<div class="l" style="left:486px;top:427px;width:555px;height:1px;background:#bbbbbb"></div>
<div class="l" style="left:6px;top:446px;width:1035px;height:1px;background:#bbbbbb"></div>
<div class="l" style="left:6px;top:472px;width:1035px;height:1px;background:#bbbbbb"></div>
<div class="l" style="left:6px;top:498px;width:1035px;height:1px;background:#bbbbbb"></div>
<div class="l" style="left:6px;top:524px;width:1035px;height:1px;background:#bbbbbb"></div>
<div class="l" style="left:6px;top:550px;width:1035px;height:1px;background:#bbbbbb"></div>
<div class="l" style="left:6px;top:576px;width:1035px;height:1px;background:#bbbbbb"></div>
<div class="l" style="left:6px;top:602px;width:1035px;height:1px;background:#bbbbbb"></div>
<div class="l" style="left:6px;top:628px;width:1035px;height:1px;background:#bbbbbb"></div>
<div class="l" style="left:6px;top:654px;width:1035px;height:1px;background:#bbbbbb"></div>
<div class="l" style="left:6px;top:680px;width:1035px;height:1px;background:#bbbbbb"></div>
<div class="l" style="left:6px;top:706px;width:1035px;height:1px;background:#bbbbbb"></div>
<div class="l" style="left:6px;top:732px;width:1035px;height:1px;background:#bbbbbb"></div>
<div class="l" style="left:6px;top:407px;width:1px;height:300px;background:#bbbbbb"></div>
<div class="l" style="left:87px;top:407px;width:1px;height:300px;background:#bbbbbb"></div>
<div class="l" style="left:167px;top:407px;width:1px;height:300px;background:#bbbbbb"></div>
<div class="l" style="left:259px;top:407px;width:1px;height:300px;background:#bbbbbb"></div>
<div class="l" style="left:354px;top:407px;width:1px;height:300px;background:#bbbbbb"></div>
<div class="l" style="left:394px;top:407px;width:1px;height:300px;background:#bbbbbb"></div>
<div class="l" style="left:486px;top:407px;width:1px;height:300px;background:#bbbbbb"></div>
<div class="l" style="left:537px;top:427px;width:1px;height:280px;background:#bbbbbb"></div>
<div class="l" style="left:626px;top:427px;width:1px;height:280px;background:#bbbbbb"></div>
<div class="l" style="left:681px;top:407px;width:1px;height:300px;background:#bbbbbb"></div>
<div class="l" style="left:750px;top:427px;width:1px;height:280px;background:#bbbbbb"></div>
<div class="l" style="left:820px;top:427px;width:1px;height:280px;background:#bbbbbb"></div>
<div class="l" style="left:891px;top:407px;width:1px;height:300px;background:#bbbbbb"></div>
<div class="l" style="left:931px;top:427px;width:1px;height:280px;background:#bbbbbb"></div>
<div class="l" style="left:972px;top:427px;width:1px;height:280px;background:#bbbbbb"></div>
<div class="l" style="left:6px;top:706px;width:1px;height:27px;background:#bbbbbb"></div>
<div class="l" style="left:6px;top:447px;width:1px;height:259px;background:#dfe8fa"></div>
<div class="l" style="left:87px;top:447px;width:1px;height:259px;background:#dfe8fa"></div>
<div class="l" style="left:7px;top:472px;width:80px;height:1px;background:#9dbcf2"></div>
<div class="l" style="left:7px;top:498px;width:80px;height:1px;background:#9dbcf2"></div>
<div class="l" style="left:7px;top:524px;width:80px;height:1px;background:#9dbcf2"></div>
<div class="l" style="left:7px;top:550px;width:80px;height:1px;background:#9dbcf2"></div>
<div class="l" style="left:7px;top:576px;width:80px;height:1px;background:#9dbcf2"></div>
<div class="l" style="left:7px;top:602px;width:80px;height:1px;background:#9dbcf2"></div>
<div class="l" style="left:7px;top:628px;width:80px;height:1px;background:#9dbcf2"></div>
<div class="l" style="left:7px;top:654px;width:80px;height:1px;background:#9dbcf2"></div>
<div class="l" style="left:7px;top:680px;width:80px;height:1px;background:#9dbcf2"></div>
</body></html>
